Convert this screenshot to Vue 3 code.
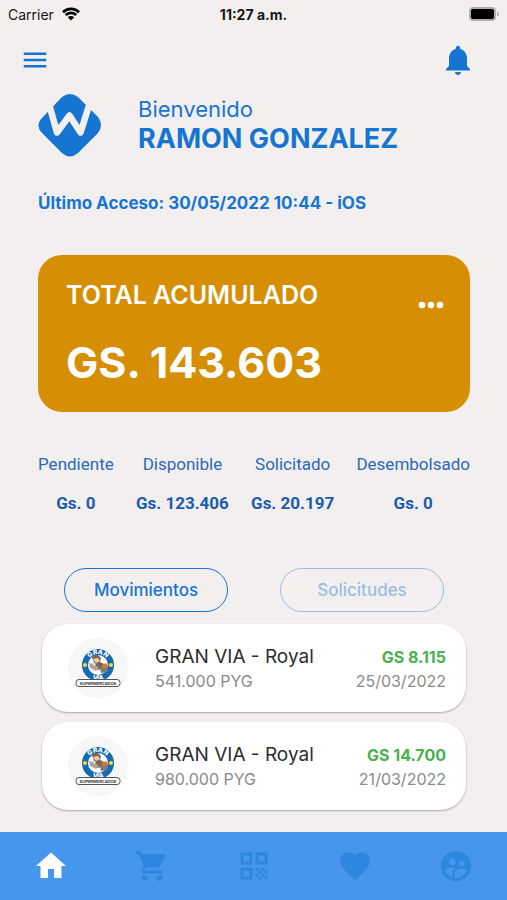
<template>
  <div class="screen">
    <header class="status-bar">
      <span class="carrier">
        Carrier
        <svg class="wifi" viewBox="0 0 18 14" aria-hidden="true">
          <path d="M1 5.2a11.4 11.4 0 0 1 16 0" />
          <path d="M3.7 8a7.6 7.6 0 0 1 10.6 0" />
          <path class="dot" d="M9 13.6 5.8 10.3a4.6 4.6 0 0 1 6.4 0z" />
        </svg>
      </span>
      <span class="clock">11:27 a.m.</span>
      <span class="battery-wrap">
        <svg class="battery" viewBox="0 0 30 14" aria-hidden="true">
          <rect class="shell" x="0" y="0" width="27" height="14" rx="4" />
          <path class="shell" d="M28 4.5c2.6.8 2.6 4.2 0 5z" />
          <rect x="2" y="2" width="23" height="10" rx="2" />
        </svg>
      </span>
    </header>

    <div class="toolbar">
      <button type="button" class="icon-btn" aria-label="Menú">
        <svg class="menu-icon" viewBox="0 0 24 24"><path d="M3 18h18v-2H3v2zm0-5h18v-2H3v2zm0-7v2h18V6H3z" /></svg>
      </button>
      <button type="button" class="icon-btn" aria-label="Notificaciones">
        <svg class="bell-icon" viewBox="0 0 24 24">
          <path d="M12 22c1.1 0 2-.9 2-2h-4c0 1.1.89 2 2 2zm6-6v-5c0-3.07-1.64-5.64-4.5-6.32V4c0-.83-.67-1.5-1.5-1.5s-1.5.67-1.5 1.5v.68C7.63 5.36 6 7.92 6 11v5l-2 2v1h16v-1l-2-2z" />
        </svg>
      </button>
    </div>

    <main class="content">
      <section class="welcome">
        <svg class="logo" viewBox="0 0 64 64" aria-hidden="true">
          <path class="logo-shape" d="M24 4Q32-2 40 4L60 24Q66 32 60 40L40 60Q32 67 24 60L3 39Q-2 32 3 26Z" />
          <path class="logo-w" d="M11 11 19 39.5 31.5 22.5 42.5 39.5 51.500 11" />
        </svg>
        <div>
          <p class="greeting">Bienvenido</p>
          <h1 class="user-name">RAMON GONZALEZ</h1>
        </div>
      </section>

      <p class="last-access">Último Acceso: 30/05/2022 10:44 - iOS</p>

      <section class="total-card">
        <div class="total-head">
          <h2>TOTAL ACUMULADO</h2>
          <button type="button" class="more" aria-label="Más opciones">
            <svg viewBox="0 0 26 8"><circle cx="4" cy="4" r="3.3" /><circle cx="13" cy="4" r="3.3" /><circle cx="22" cy="4" r="3.3" /></svg>
          </button>
        </div>
        <p class="total-value">GS. 143.603</p>
      </section>

      <dl class="stats">
        <div v-for="stat in stats" :key="stat.label" class="stat">
          <dt>{{ stat.label }}</dt>
          <dd>{{ stat.value }}</dd>
        </div>
      </dl>

      <div class="tabs">
        <button
          v-for="tab in tabs"
          :key="tab"
          type="button"
          class="tab"
          :class="{ active: tab === activeTab }"
          @click="activeTab = tab"
        >
          {{ tab }}
        </button>
      </div>

      <ul class="movements">
        <li v-for="item in movements" :key="item.id" class="movement">
          <div class="avatar">
            <svg viewBox="0 0 60 60" role="img" aria-label="Gran Via">
              <defs>
                <path :id="'top-' + item.id" d="M19 27A11 11 0 0 1 41 27" />
                <path :id="'bottom-' + item.id" d="M14.8 27A15.2 15.2 0 0 0 45.2 27" />
              </defs>
              <circle cx="30" cy="27" r="13" fill="#fff" stroke="#1769b3" stroke-width="6" />
              <text class="ring-text"><textPath :href="'#top-' + item.id" startOffset="50%">GRAN</textPath></text>
              <circle cx="17" cy="27" r="2" fill="#f4dc32" />
              <circle cx="43" cy="27" r="2" fill="#f4dc32" />
              <path d="M24 20q1-4 6-3l3 3-1 4 4 2-2 5-5 1-5-5 2-3z" fill="#80644f" />
              <path d="M25 21l5-1 2 3-4 2z" fill="#ead2b8" />
              <path d="M21 25l5 1 5 4-3 3-6-3z" fill="#b3a596" />
              <path d="M25 24l3 2-2 2z" fill="#fff" />
              <path d="M32 30l9-3-2 7-6 1z" fill="#777b80" />
              <path d="M34 27l4-2 2 3-5 3z" fill="#d97832" />
              <text class="ring-text"><textPath :href="'#bottom-' + item.id" startOffset="50%">VIA</textPath></text>
              <rect x="8" y="41.500" width="44" height="7" rx="3" fill="#fff" stroke="#555" />
              <text class="plate-text" x="30" y="46.5">SUPERMERCADOS</text>
            </svg>
          </div>
          <div class="movement-info">
            <h3>{{ item.store }}</h3>
            <p>{{ item.amount }}</p>
          </div>
          <div class="movement-side">
            <strong>{{ item.cashback }}</strong>
            <time>{{ item.date }}</time>
          </div>
        </li>
      </ul>
    </main>

    <nav class="bottom-nav">
      <a
        v-for="link in links"
        :key="link.label"
        href="#"
        :aria-label="link.label"
        :class="{ current: link.label === 'Inicio' }"
      >
        <svg viewBox="0 0 24 24"><path :d="link.icon" /></svg>
      </a>
    </nav>
  </div>
</template>

<script setup>
import { ref } from 'vue'

const stats = [
  { label: 'Pendiente', value: 'Gs. 0' },
  { label: 'Disponible', value: 'Gs. 123.406' },
  { label: 'Solicitado', value: 'Gs. 20.197' },
  { label: 'Desembolsado', value: 'Gs. 0' }
]

const tabs = ['Movimientos', 'Solicitudes']
const activeTab = ref('Movimientos')

const movements = [
  { id: 1, store: 'GRAN VIA - Royal', amount: '541.000 PYG', cashback: 'GS 8.115', date: '25/03/2022' },
  { id: 2, store: 'GRAN VIA - Royal', amount: '980.000 PYG', cashback: 'GS 14.700', date: '21/03/2022' }
]

const links = [
  { label: 'Inicio', icon: 'M10 20v-6h4v6h5v-8h3L12 3 2 12h3v8z' },
  {
    label: 'Compras',
    icon: 'M7 18c-1.1 0-1.99.9-1.99 2S5.9 22 7 22s2-.9 2-2-.9-2-2-2zM1 2v2h2l3.6 7.59-1.35 2.45c-.16.28-.25.61-.25.96 0 1.1.9 2 2 2h12v-2H7.42c-.14 0-.25-.11-.25-.25l.03-.12.9-1.63h7.45c.75 0 1.41-.41 1.75-1.03l3.58-6.49c.08-.14.12-.31.12-.48 0-.55-.45-1-1-1H5.21l-.94-2H1zm16 16c-1.1 0-1.99.9-1.99 2s.89 2 1.99 2 2-.9 2-2-.9-2-2-2z'
  },
  {
    label: 'Código QR',
    icon: 'M3 11h8V3H3v8zm2-6h4v4H5V5zM3 21h8v-8H3v8zm2-6h4v4H5v-4zM13 3v8h8V3h-8zm6 6h-4V5h4v4zM19 19h2v2h-2zM13 13h2v2h-2zM15 15h2v2h-2zM13 17h2v2h-2zM15 19h2v2h-2zM17 17h2v2h-2zM17 13h2v2h-2zM19 15h2v2h-2z'
  },
  {
    label: 'Favoritos',
    icon: 'M12 21.35l-1.45-1.32C5.4 15.36 2 12.28 2 8.5 2 5.42 4.42 3 7.5 3c1.74 0 3.41.81 4.5 2.09C13.09 3.81 14.76 3 16.5 3 19.58 3 22 5.42 22 8.5c0 3.78-3.4 6.86-8.55 11.54L12 21.35z'
  },
  {
    label: 'Comunidad',
    icon: 'M11.99 2c-5.52 0-10 4.48-10 10s4.48 10 10 10 10-4.48 10-10-4.48-10-10-10zm3.61 6.34c1.07 0 1.93.86 1.93 1.93 0 1.07-.86 1.93-1.93 1.93-1.07 0-1.93-.86-1.93-1.93-.01-1.07.86-1.93 1.93-1.93zm-6-1.58c1.3 0 2.36 1.06 2.36 2.36 0 1.3-1.06 2.36-2.36 2.36s-2.36-1.06-2.36-2.36c0-1.31 1.05-2.36 2.36-2.36zm0 9.13v3.75c-2.4-.75-4.3-2.6-5.14-4.96 1.05-1.12 3.67-1.69 5.14-1.69.53 0 1.2.08 1.9.22-1.64.87-1.9 2.02-1.9 2.68zM11.99 20c-.27 0-.53-.01-.79-.04v-4.07c0-1.42 2.94-2.13 4.4-2.13 1.07 0 2.92.39 3.84 1.15-1.17 2.97-4.06 5.09-7.45 5.09z'
  }
]
</script>

<style>
body {
  margin: 0;
  background: #f2efee;
}
</style>

<style scoped>
.screen {
  display: flex;
  flex-direction: column;
  min-height: 100vh;
  background: #f2efee;
  color: #1675d1;
  font-family: Inter, 'Liberation Sans', sans-serif;
}

h1,
h2,
h3,
p,
dl,
dd,
ul {
  margin: 0;
  padding: 0;
}

button {
  padding: 0;
  border: 0;
  background: none;
  color: inherit;
  font-family: inherit;
  cursor: pointer;
}

svg {
  display: block;
}

.status-bar {
  display: grid;
  grid-template-columns: 1fr auto 1fr;
  align-items: center;
  height: 28px;
  padding: 0 8px;
  color: #161616;
  font-size: 14px;
}

.carrier {
  display: flex;
  align-items: center;
  gap: 8px;
}

.wifi {
  width: 18px;
  height: 14px;
  fill: none;
  stroke: #000;
  stroke-width: 2.6;
}

.wifi .dot {
  fill: #000;
  stroke: none;
}

.clock {
  font-weight: 700;
}

.battery-wrap {
  justify-self: end;
}

.battery {
  width: 30px;
  height: 14px;
}

.battery .shell {
  fill: #b0adac;
}

.toolbar {
  display: flex;
  align-items: center;
  justify-content: space-between;
  height: 64px;
  padding: 0 31px 0 20px;
}

.icon-btn svg {
  fill: currentColor;
}

.menu-icon {
  width: 30px;
  height: 30px;
}

.bell-icon {
  width: 36px;
  height: 36px;
}

.content {
  flex: 1;
  padding: 0 37px 20px 38px;
}

.welcome {
  display: flex;
  align-items: center;
  gap: 36px;
  padding-top: 1px;
}

.logo {
  width: 64px;
  height: 64px;
}

.logo-shape {
  fill: #1675d1;
}

.logo-w {
  fill: none;
  stroke: #f2efee;
  stroke-width: 6.5;
  stroke-linejoin: round;
}

.greeting {
  font-size: 22px;
  line-height: 28px;
}

.user-name {
  font-size: 27px;
  font-weight: 700;
  line-height: 32px;
}

.last-access {
  margin-top: 36px;
  font-size: 17px;
  font-weight: 700;
  line-height: 20px;
}

.total-card {
  margin-top: 42px;
  padding: 24px 26px 24px 28px;
  border-radius: 24px;
  background: #d68f05;
  color: #fff;
}

.total-head {
  display: flex;
  align-items: center;
  justify-content: space-between;
}

.total-head h2 {
  font-size: 25px;
  font-weight: 600;
  line-height: 32px;
}

.more {
  padding-top: 20px;
}

.more svg {
  width: 26px;
  height: 8px;
  fill: #fff;
}

.total-value {
  margin-top: 25px;
  font-size: 43px;
  font-weight: 700;
  line-height: 52px;
}

.stats {
  display: flex;
  justify-content: space-between;
  margin-top: 42px;
  color: #2b69b8;
  font-family: Roboto, 'Liberation Sans', sans-serif;
  font-size: 17px;
  line-height: 20px;
  text-align: center;
}

.stat dd {
  margin-top: 19px;
  color: #1c5cad;
  font-weight: 700;
}

.tabs {
  display: flex;
  justify-content: space-around;
  margin-top: 55px;
}

.tab {
  width: 38%;
  height: 44px;
  border: 1px solid #1675d1;
  border-radius: 22px;
  font-size: 17px;
  font-weight: 500;
  opacity: 0.4;
}

.tab.active {
  opacity: 1;
}

.movements {
  display: flex;
  flex-direction: column;
  gap: 10px;
  margin: 12px 4px 0;
  list-style: none;
}

.movement {
  display: flex;
  align-items: center;
  height: 88px;
  padding: 0 20px 0 26px;
  border-radius: 26px;
  background: #fff;
  box-shadow: 0 1px 2px rgba(0, 0, 0, 0.3);
}

.avatar {
  width: 60px;
  height: 60px;
  margin-right: 27px;
  border-radius: 50%;
  background: #f7f7f7;
}

.ring-text {
  fill: #fff;
  font-size: 6.5px;
  font-weight: 800;
  text-anchor: middle;
}

.plate-text {
  fill: #333;
  font-size: 4px;
  font-weight: 700;
  text-anchor: middle;
}

.movement-info {
  flex: 1;
  padding-top: 2px;
  line-height: 24px;
}

.movement-info h3 {
  color: #2d2d2d;
  font-size: 19px;
  font-weight: 400;
}

.movement-info p {
  color: #8a8a8a;
  font-size: 16px;
}

.movement-side {
  display: flex;
  flex-direction: column;
  align-items: flex-end;
  padding-top: 2px;
  font-size: 16px;
  line-height: 24px;
}

.movement-side strong {
  color: #4caf50;
  font-weight: 700;
}

.movement-side time {
  color: #8a8a8a;
}

.bottom-nav {
  display: flex;
  height: 68px;
  background: #4596ec;
}

.bottom-nav a {
  display: flex;
  flex: 1;
  align-items: center;
  justify-content: center;
  color: #2e86de;
}

.bottom-nav a.current {
  color: #fff;
}

.bottom-nav svg {
  width: 36px;
  height: 36px;
  fill: currentColor;
}
</style>
